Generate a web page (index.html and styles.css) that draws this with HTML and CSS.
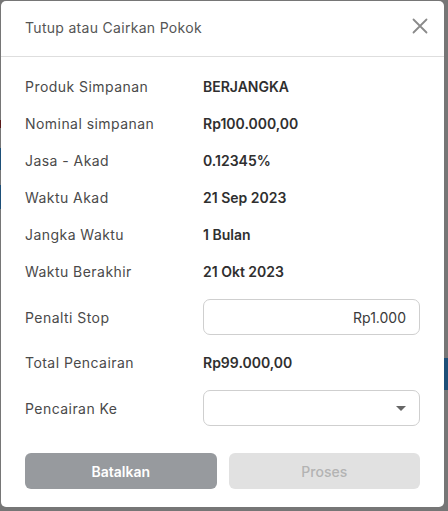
FILE: index.html
```html
<!DOCTYPE html>
<html lang="id">
<head>
<meta charset="utf-8">
<title>Tutup atau Cairkan Pokok</title>
<link rel="stylesheet" href="styles.css">
</head>
<body>
<div class="backdrop">
  <span class="bg-bit bit-red"></span>
  <span class="bg-bit bit-blue1"></span>
  <span class="bg-bit bit-blue2"></span>
  <span class="bg-bit bit-blue3"></span>
</div>
<div class="modal">
  <div class="modal-header">
    <h1 class="modal-title">Tutup atau Cairkan Pokok</h1>
    <button class="close-btn" aria-label="Tutup">
      <svg width="16" height="16" viewBox="0 0 16 16"><path d="M1.5 1.5 L14.5 14.5 M14.5 1.5 L1.5 14.5" stroke="#8a8a8a" stroke-width="1.8" fill="none" stroke-linecap="round"/></svg>
    </button>
  </div>
  <div class="modal-body">
    <div class="row"><span class="label">Produk Simpanan</span><span class="value">BERJANGKA</span></div>
    <div class="row"><span class="label">Nominal simpanan</span><span class="value">Rp100.000,00</span></div>
    <div class="row"><span class="label">Jasa - Akad</span><span class="value">0.12345%</span></div>
    <div class="row"><span class="label">Waktu Akad</span><span class="value">21 Sep 2023</span></div>
    <div class="row"><span class="label">Jangka Waktu</span><span class="value">1 Bulan</span></div>
    <div class="row"><span class="label">Waktu Berakhir</span><span class="value">21 Okt 2023</span></div>
    <div class="row row-field"><span class="label">Penalti Stop</span><div class="field field-input">Rp1.000</div></div>
    <div class="row"><span class="label">Total Pencairan</span><span class="value">Rp99.000,00</span></div>
    <div class="row row-field"><span class="label">Pencairan Ke</span><div class="field field-select"><span class="caret"></span></div></div>
  </div>
  <div class="modal-footer">
    <button class="btn btn-cancel">Batalkan</button>
    <button class="btn btn-submit" disabled>Proses</button>
  </div>
</div>
</body>
</html>
```
FILE: styles.css
```css
* { box-sizing: border-box; }
html, body {
  margin: 0;
  padding: 0;
  width: 448px;
  height: 511px;
  overflow: hidden;
}
body {
  background: #767676;
  font-family: Inter, "Noto Sans", sans-serif;
  position: relative;
}
.backdrop {
  position: absolute;
  inset: 0;
}
.bg-bit {
  position: absolute;
  display: block;
}
.bit-red { left: 0; top: 120px; width: 1px; height: 8px; background: #5a1a1a; }
.bit-blue1 { left: 0; top: 148px; width: 1px; height: 22px; background: #1d4f78; }
.bit-blue2 { left: 0; top: 185px; width: 1px; height: 24px; background: #1d4f78; }
.bit-blue3 { left: 444px; top: 358px; width: 4px; height: 32px; background: #1d4f78; }
.modal {
  position: absolute;
  left: 1px;
  top: 1px;
  width: 443px;
  height: 506px;
  background: #fff;
  border-radius: 5px;
  display: flex;
  flex-direction: column;
}
.modal-header {
  height: 56px;
  border-bottom: 1px solid #dedede;
  display: flex;
  align-items: center;
  justify-content: space-between;
  padding: 0 16px 2px 24px;
}
.modal-title {
  margin: 0;
  font-size: 14px;
  font-weight: 400;
  color: #555;
  letter-spacing: 0.3px;
}
.close-btn {
  border: 0;
  background: none;
  padding: 0;
  width: 16px;
  height: 16px;
  display: flex;
  margin-top: -3px;
}
.modal-body {
  padding: 11px 24px 0 24px;
  display: flex;
  flex-direction: column;
}
.row {
  display: grid;
  grid-template-columns: 178px 1fr;
  align-items: center;
  height: 37px;
  font-size: 14px;
}
.row-field { height: 54px; }
.label { color: #4a4a4a; letter-spacing: 0.45px; }
.value { color: #2f2f2f; font-weight: 600; }
.field {
  height: 36px;
  border: 1px solid #cfcfcf;
  border-radius: 7px;
  display: flex;
  align-items: center;
  position: relative;
}
.field-input {
  justify-content: flex-end;
  padding-right: 13px;
  color: #3a3a3a;
}
.field-select { justify-content: flex-end; padding-right: 13px; }
.caret {
  width: 0;
  height: 0;
  border-left: 5px solid transparent;
  border-right: 5px solid transparent;
  border-top: 5px solid #666;
}
.modal-footer {
  padding: 18px 24px 0 24px;
  display: grid;
  grid-template-columns: 1fr 1fr;
  column-gap: 12px;
}
.btn {
  height: 36px;
  border: 0;
  border-radius: 6px;
  font-family: inherit;
  font-size: 14px;
  font-weight: 600;
}
.btn-cancel { background: #979a9e; color: #fff; }
.btn-submit { background: #e1e1e1; color: #b3b3b3; font-weight: 500; }
```
